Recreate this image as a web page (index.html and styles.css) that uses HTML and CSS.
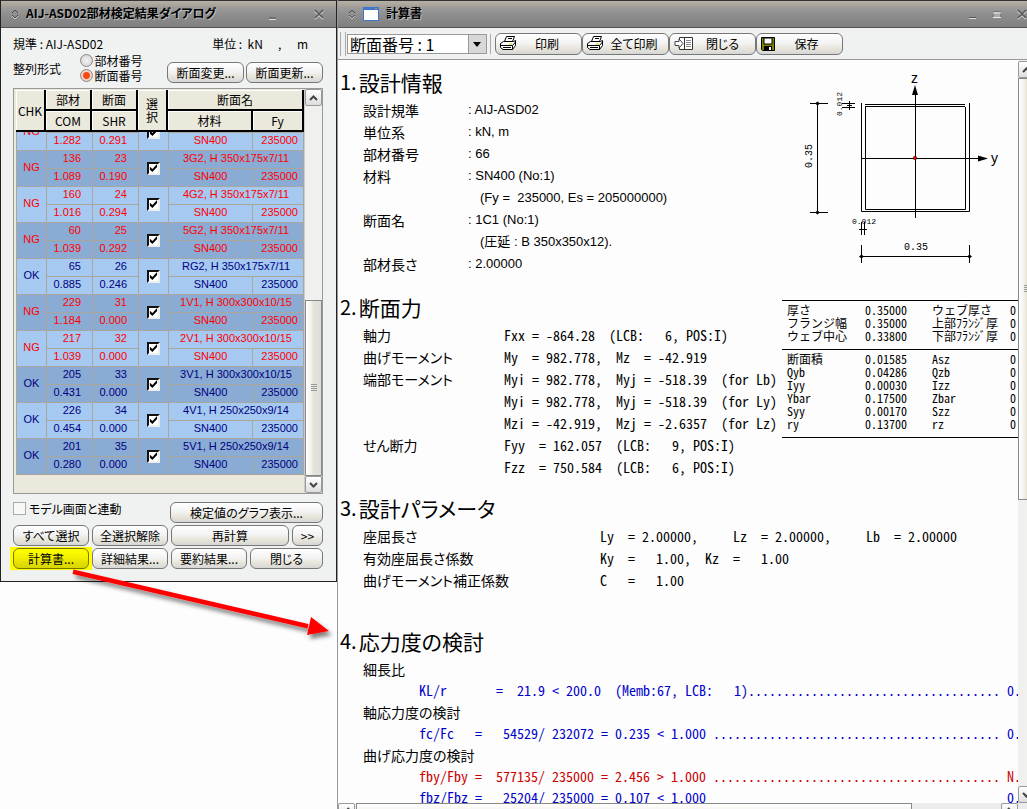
FILE: index.html
```
<!DOCTYPE html>
<html lang="ja">
<head>
<meta charset="utf-8">
<title>計算書</title>
<link rel="stylesheet" href="styles.css">
</head>
<body>
<div class="desktop">
  <section class="dialog">
    <header class="titlebar">
      <svg class="grip" width="8" height="12" viewBox="0 0 8 12"><path d="M1 5 4 2l3 3M1 7l3 3 3-3" fill="none" stroke="#4c4c4c"/><path d="M1 8l3 3 3-3" fill="none" stroke="#c8c8c8"/></svg>
      <h1 class="title">AIJ-ASD02部材検定結果ダイアログ</h1>
      <span class="caption">
        <svg width="8" height="12" viewBox="0 0 8 12"><path d="M0 10h7" stroke="#555"/><path d="M0 11.500h7" stroke="#ddd"/></svg>
        <svg width="10" height="12" viewBox="0 0 10 12"><path d="M1 3l8 8M9 3l-8 8" stroke="#ccc" stroke-width="2"/><path d="M1 2l8 8M9 2l-8 8" stroke="#555" stroke-width="1.500"/></svg>
      </span>
    </header>
    <div class="panel">
      <div class="spec"><span>規準 : AIJ-ASD02</span><span class="units">単位 :&nbsp; kN<i>,</i>m</span></div>
      <div class="sort">
        <span>整列形式</span>
        <div class="radios">
          <label><input class="radio" type="radio" name="order">部材番号</label>
          <label><input class="radio" type="radio" name="order" checked>断面番号</label>
        </div>
        <div class="sortbuttons"><button class="btn">断面変更...</button><button class="btn">断面更新...</button></div>
      </div>
      <div class="gridbox">
        <div class="gridmain">
          <table class="head">
            <colgroup><col class="c1"><col class="c2"><col class="c2"><col class="c3"><col class="c4"><col class="c5"></colgroup>
            <tr><th rowspan="2">CHK</th><th>部材</th><th>断面</th><th rowspan="2" class="pick">選<br>択</th><th colspan="2">断面名</th></tr>
            <tr><th>COM</th><th>SHR</th><th>材料</th><th>Fy</th></tr>
          </table>
          <div class="rows">
            <table class="body">
              <colgroup><col class="c1"><col class="c2"><col class="c2"><col class="c3"><col class="c4"><col class="c5"></colgroup>
              <tbody class="ng"><tr><td rowspan="2">NG</td><td></td><td></td><td rowspan="2"><input class="check" type="checkbox" aria-label="22" checked></td><td colspan="2"></td></tr>
              <tr><td class="n">1.282</td><td class="n">0.291</td><td>SN400</td><td class="f">235000</td></tr></tbody>
              <tbody class="ng"><tr><td rowspan="2">NG</td><td class="n">136</td><td class="n">23</td><td rowspan="2"><input class="check" type="checkbox" aria-label="23" checked></td><td colspan="2">3G2, H 350x175x7/11</td></tr>
              <tr><td class="n">1.089</td><td class="n">0.190</td><td>SN400</td><td class="f">235000</td></tr></tbody>
              <tbody class="ng"><tr><td rowspan="2">NG</td><td class="n">160</td><td class="n">24</td><td rowspan="2"><input class="check" type="checkbox" aria-label="24" checked></td><td colspan="2">4G2, H 350x175x7/11</td></tr>
              <tr><td class="n">1.016</td><td class="n">0.294</td><td>SN400</td><td class="f">235000</td></tr></tbody>
              <tbody class="ng"><tr><td rowspan="2">NG</td><td class="n">60</td><td class="n">25</td><td rowspan="2"><input class="check" type="checkbox" aria-label="25" checked></td><td colspan="2">5G2, H 350x175x7/11</td></tr>
              <tr><td class="n">1.039</td><td class="n">0.292</td><td>SN400</td><td class="f">235000</td></tr></tbody>
              <tbody><tr><td rowspan="2">OK</td><td class="n">65</td><td class="n">26</td><td rowspan="2"><input class="check" type="checkbox" aria-label="26" checked></td><td colspan="2">RG2, H 350x175x7/11</td></tr>
              <tr><td class="n">0.885</td><td class="n">0.246</td><td>SN400</td><td class="f">235000</td></tr></tbody>
              <tbody class="ng"><tr><td rowspan="2">NG</td><td class="n">229</td><td class="n">31</td><td rowspan="2"><input class="check" type="checkbox" aria-label="31" checked></td><td colspan="2">1V1, H 300x300x10/15</td></tr>
              <tr><td class="n">1.184</td><td class="n">0.000</td><td>SN400</td><td class="f">235000</td></tr></tbody>
              <tbody class="ng"><tr><td rowspan="2">NG</td><td class="n">217</td><td class="n">32</td><td rowspan="2"><input class="check" type="checkbox" aria-label="32" checked></td><td colspan="2">2V1, H 300x300x10/15</td></tr>
              <tr><td class="n">1.039</td><td class="n">0.000</td><td>SN400</td><td class="f">235000</td></tr></tbody>
              <tbody><tr><td rowspan="2">OK</td><td class="n">205</td><td class="n">33</td><td rowspan="2"><input class="check" type="checkbox" aria-label="33" checked></td><td colspan="2">3V1, H 300x300x10/15</td></tr>
              <tr><td class="n">0.431</td><td class="n">0.000</td><td>SN400</td><td class="f">235000</td></tr></tbody>
              <tbody><tr><td rowspan="2">OK</td><td class="n">226</td><td class="n">34</td><td rowspan="2"><input class="check" type="checkbox" aria-label="34" checked></td><td colspan="2">4V1, H 250x250x9/14</td></tr>
              <tr><td class="n">0.454</td><td class="n">0.000</td><td>SN400</td><td class="f">235000</td></tr></tbody>
              <tbody><tr><td rowspan="2">OK</td><td class="n">201</td><td class="n">35</td><td rowspan="2"><input class="check" type="checkbox" aria-label="35" checked></td><td colspan="2">5V1, H 250x250x9/14</td></tr>
              <tr><td class="n">0.280</td><td class="n">0.000</td><td>SN400</td><td class="f">235000</td></tr></tbody>
            </table>
          </div>
        </div>
        <div class="vbar">
          <span class="sbtn"><svg width="9" height="6" viewBox="0 0 9 6"><path d="M1 5l3.500-3.500L8 5" fill="none" stroke="#444" stroke-width="2"/></svg></span>
          <span class="track"></span>
          <span class="thumb"><svg width="6" height="8" viewBox="0 0 6 8"><path d="M0 .5h6M0 2.500h6M0 4.500h6M0 6.500h6" stroke="#999"/></svg></span>
          <span class="sbtn"><svg width="9" height="6" viewBox="0 0 9 6"><path d="M1 1l3.500 3.500L8 1" fill="none" stroke="#444" stroke-width="2"/></svg></span>
        </div>
      </div>
      <div class="link"><label><input class="tick" type="checkbox">モデル画面と連動</label><button class="btn">検定値のグラフ表示...</button></div>
      <div class="actions">
        <button class="btn">すべて選択</button><button class="btn">全選択解除</button><button class="btn grow">再計算</button><button class="btn more">&gt;&gt;</button>
      </div>
      <div class="actions">
        <span class="marked"><button class="btn">計算書...</button></span><button class="btn">詳細結果...</button><button class="btn">要約結果...</button><button class="btn grow">閉じる</button>
      </div>
    </div>
  </section>

  <main class="report">
    <header class="titlebar">
      <svg class="grip" width="8" height="12" viewBox="0 0 8 12"><path d="M1 5 4 2l3 3M1 7l3 3 3-3" fill="none" stroke="#4c4c4c"/><path d="M1 8l3 3 3-3" fill="none" stroke="#c8c8c8"/></svg>
      <svg class="app" width="16" height="14" viewBox="0 0 16 14"><path d="M0 0h16v14H0z" fill="#3c78d0"/><path d="M1 3h14v10H1z" fill="#fff"/><path d="M12 1h2v1h-2z" fill="#f08030"/></svg>
      <h1 class="title">計算書</h1>
      <span class="caption cut">
        <svg width="8" height="12" viewBox="0 0 8 12"><path d="M0 9.500h7" stroke="#555"/><path d="M0 10.500h7" stroke="#ddd"/></svg>
        <svg width="10" height="12" viewBox="0 0 10 12"><path d="M1.500 3.500h7v6h-7z" fill="#aaa" stroke="#777"/><path d="M1 5h8M1 9.500h8" stroke="#eee"/></svg>
        <svg width="10" height="12" viewBox="0 0 10 12"><path d="M1 3l8 8M9 3l-8 8" stroke="#ccc" stroke-width="2"/><path d="M1 2l8 8M9 2l-8 8" stroke="#555" stroke-width="1.500"/></svg>
      </span>
    </header>
    <nav class="toolbar">
      <span class="handle"></span>
      <span class="picker"><select aria-label="断面番号"><option>断面番号 : 1</option></select><svg width="18" height="18" viewBox="0 0 18 18"><path d="M0 0h18v18H0z" fill="#d8d8d8"/><path d="M.5 0v18" stroke="#999"/><path d="M5 7h8l-4 5z" fill="#000"/></svg></span>
      <span class="sep"></span>
      <button class="btn tool"><svg width="17" height="15" viewBox="0 0 17 15"><path d="M6.500 .5h8l-2 5h-8z" fill="#fff" stroke="#000"/><path d="M.5 7.500l3-2h10l2-1v5l-3 4H3l-2.500-2z" fill="#fff" stroke="#000"/><path d="M1 9.500h11.500l3-3.500M3 11.500h8M12.500 9.500v4M8 2.500h4" fill="none" stroke="#000"/><path d="M9 8h3" stroke="#cc0"/></svg><span>印刷</span></button>
      <button class="btn tool"><svg width="17" height="15" viewBox="0 0 17 15"><path d="M6.500 .5h8l-2 5h-8z" fill="#fff" stroke="#000"/><path d="M.5 7.500l3-2h10l2-1v5l-3 4H3l-2.500-2z" fill="#fff" stroke="#000"/><path d="M1 9.500h11.500l3-3.500M3 11.500h8M12.500 9.500v4M8 2.500h4" fill="none" stroke="#000"/><path d="M9 8h3" stroke="#cc0"/></svg><span>全て印刷</span></button>
      <button class="btn tool"><svg width="20" height="15" viewBox="0 0 20 15"><path d="M5.500 1.500h13v12h-13zM10.500 1v13" fill="#fff" stroke="#333"/><path d="M12 4.500h5M12 6.500h5M12 8.500h5M12 10.500h5" stroke="#888"/><path d="M1 5.500h4V3l4 4.500L5 12V9.500H1z" fill="#fff" stroke="#444"/></svg><span>閉じる</span></button>
      <button class="btn tool"><svg width="14" height="14" viewBox="0 0 14 14"><path d="M.5.5h13v13h-12l-1-1z" fill="#808000" stroke="#000"/><path d="M3 1h8v6H3z" fill="#fff" stroke="#000"/><path d="M3 9h8v5H3z" fill="#000"/><path d="M8 10h2v3H8z" fill="#fff"/></svg><span>保存</span></button>
    </nav>
    <div class="view">
      <article class="paper">
        <div class="upper">
          <div class="summary">
            <h2>1. <b>設計情報</b></h2>
            <dl class="info">
              <dt>設計規準</dt><dd>: AIJ-ASD02</dd>
              <dt>単位系</dt><dd>: kN, m</dd>
              <dt>部材番号</dt><dd>: 66</dd>
              <dt>材料</dt><dd>: SN400 (No:1)</dd>
              <dd class="sub">(Fy =&nbsp; 235000, Es = 205000000)</dd>
              <dt>断面名</dt><dd>: 1C1 (No:1)</dd>
              <dd class="sub">(圧延 : B 350x350x12).</dd>
              <dt>部材長さ</dt><dd>: 2.00000</dd>
            </dl>
            <h2 class="second">2. <b>断面力</b></h2>
            <dl class="info forces">
              <dt>軸力</dt><dd>Fxx = -864.28  (LCB:   6, POS:I)</dd>
              <dt>曲げモーメント</dt><dd>My  = 982.778,  Mz  = -42.919</dd>
              <dt>端部モーメント</dt><dd>Myi = 982.778,  Myj = -518.39  (for Lb)</dd>
              <dd>Myi = 982.778,  Myj = -518.39  (for Ly)</dd>
              <dd>Mzi = -42.919,  Mzj = -2.6357  (for Lz)</dd>
              <dt>せん断力</dt><dd>Fyy  = 162.057  (LCB:   9, POS:I)</dd>
              <dd>Fzz  = 750.584  (LCB:   6, POS:I)</dd>
            </dl>
          </div>
          <aside class="figure">
            <svg class="drawing" width="236" height="240" viewBox="782 60 236 240">
              <g fill="none" stroke="#000">
                <path d="M861.500 103v108.500h108V103M865 104.500h100M865.500 106v103.500h100V107M865 106.500h100"/>
                <path d="M861 158.500h120M915.500 93v125"/>
                <path d="M810 103.500h18M810 212.500h18M817.500 103v109"/>
                <path d="M842 103.500h13M842 107.500h13M849.500 101v9M847 105.500h5"/>
                <path d="M861.500 222v13M864.500 222v13M859 229.500h8"/>
                <path d="M861.500 245v18M969.500 245v18M861 256.500h108"/>
              </g>
              <path d="M915 85l3 10h-6zM988 158.500l-10 3v-6zM815 103.500l2.500-2 2.500 2-2.500 2zM815 212.500l2.500-2 2.500 2-2.500 2zM859 256.500l2.500-2 2.500 2-2.500 2zM967 256.500l2.500-2 2.500 2-2.500 2z"/>
              <circle cx="915" cy="158" r="1.800" fill="#e00" stroke="#000" stroke-width=".5"/>
              <text class="axis" x="911" y="83">z</text><text class="axis" x="991" y="163">y</text>
              <text class="dim" x="904" y="250">0.35</text><text class="dim small" x="852" y="224">0.012</text>
              <text class="dim" transform="translate(812 168) rotate(-90)">0.35</text>
              <text class="dim small" transform="translate(842 116) rotate(-90)">0.012</text>
            </svg>
            <table class="props">
              <tbody>
                <tr><th>厚さ</th><td>0.35000</td><th>ウェブ厚さ</th><td class="edge">0.</td></tr>
                <tr><th>フランジ幅</th><td>0.35000</td><th>上部ﾌﾗﾝｼﾞ厚</th><td class="edge">0.</td></tr>
                <tr><th>ウェブ中心</th><td>0.33800</td><th>下部ﾌﾗﾝｼﾞ厚</th><td class="edge">0.</td></tr>
              </tbody>
              <tbody>
                <tr><th>断面積</th><td>0.01585</td><th>Asz</th><td class="edge">0.</td></tr>
                <tr><th>Qyb</th><td>0.04286</td><th>Qzb</th><td class="edge">0.</td></tr>
                <tr><th>Iyy</th><td>0.00030</td><th>Izz</th><td class="edge">0.</td></tr>
                <tr><th>Ybar</th><td>0.17500</td><th>Zbar</th><td class="edge">0.</td></tr>
                <tr><th>Syy</th><td>0.00170</td><th>Szz</th><td class="edge">0.</td></tr>
                <tr><th>ry</th><td>0.13700</td><th>rz</th><td class="edge">0.</td></tr>
              </tbody>
            </table>
          </aside>
        </div>
        <h2>3. <b>設計パラメータ</b></h2>
        <dl class="info params">
          <dt>座屈長さ</dt><dd>Ly  = 2.00000,     Lz  = 2.00000,     Lb  = 2.00000</dd>
          <dt>有効座屈長さ係数</dt><dd>Ky  =   1.00,  Kz  =   1.00</dd>
          <dt>曲げモーメント補正係数</dt><dd>C   =   1.00</dd>
        </dl>
        <h2 class="fourth">4. <b>応力度の検討</b></h2>
        <div class="stress">
          <h3>細長比</h3>
          <p>KL/r       =  21.9 &lt; 200.0  (Memb:67, LCB:   1).................................... 0.</p>
          <h3>軸応力度の検討</h3>
          <p>fc/Fc   =   54529/ 232072 = 0.235 &lt; 1.000 ......................................... 0.</p>
          <h3>曲げ応力度の検討</h3>
          <p class="bad">fby/Fby =  577135/ 235000 = 2.456 &gt; 1.000 ......................................... N.</p>
          <p>fbz/Fbz =   25204/ 235000 = 0.107 &lt; 1.000                                           0.</p>
        </div>
      </article>
      <div class="vbar side">
        <span class="sbtn"><svg width="9" height="6" viewBox="0 0 9 6"><path d="M1 5l3.500-3.500L8 5" fill="none" stroke="#444" stroke-width="2"/></svg></span>
        <span class="thumb"><svg width="6" height="8" viewBox="0 0 6 8"><path d="M0 .5h6M0 2.500h6M0 4.500h6M0 6.500h6" stroke="#999"/></svg></span>
        <span class="track"></span>
        <span class="sbtn"><svg width="9" height="6" viewBox="0 0 9 6"><path d="M1 1l3.500 3.500L8 1" fill="none" stroke="#444" stroke-width="2"/></svg></span>
      </div>
    </div>
    <div class="hbar">
      <span class="sbtn"><svg width="6" height="9" viewBox="0 0 6 9"><path d="M5 1L1.500 4.500 5 8" fill="none" stroke="#444" stroke-width="2"/></svg></span>
      <span class="hthumb"></span><span class="htrack"></span>
      <span class="sbtn"><svg width="6" height="9" viewBox="0 0 6 9"><path d="M1 1l3.500 3.500L1 8" fill="none" stroke="#444" stroke-width="2"/></svg></span>
    </div>
  </main>

  <svg class="pointer" width="270" height="80" viewBox="68 565 270 80">
    <defs><filter id="soft" x="-10%" y="-20%" width="130%" height="150%"><feDropShadow dx="3" dy="4" stdDeviation="2" flood-color="#000" flood-opacity=".5"/></filter></defs>
    <g filter="url(#soft)" fill="#f00"><path d="M73.500 569.500l235 54.500-1 4.500-235-54.500z"/><path d="M311 617l18 14-22 4z"/></g>
  </svg>
</div>
</body>
</html>
```
FILE: styles.css
```
* { box-sizing: border-box; }
body {
  margin: 0;
  background: #fdfdfd;
  color: #000;
  font-family: "Noto Sans CJK JP", sans-serif;
  font-size: 12px;
  line-height: 16px;
}
h1, h2, h3, p, dl, dt, dd { margin: 0; font-weight: 400; }
table { border-collapse: separate; border-spacing: 0; table-layout: fixed; }
th { font-weight: 400; }
svg { display: block; flex: none; }
button, input, select { font: inherit; color: inherit; margin: 0; }

.desktop { position: relative; display: flex; align-items: flex-start; height: 100vh; overflow: hidden; }

.titlebar {
  display: flex;
  flex: none;
  align-items: center;
  height: 28px;
  padding: 0 12px 0 10px;
  border-top: 1px solid #333;
  border-bottom: 1px solid #555;
  background: linear-gradient(#b5b0a8, #a5a098 20%, #999 30%, #8b8b8b 60%, #808080);
}
.grip { margin-right: 7px; }
.app { margin-right: 7px; }
.title { font-size: 12px; line-height: 24px; height: 27px; font-weight: 700; font-feature-settings: "palt"; text-shadow: 1px 1px #bbb; white-space: nowrap; }
.caption { display: flex; gap: 37px; margin-left: auto; }
.cut { gap: 15px; margin-right: -12px; }

.dialog { flex: none; width: 337px; border: 1px solid #222; border-top: 0; background: #f0f2f1; }
.panel { padding: 8px 13px 12px 12px; }
.spec { display: flex; justify-content: space-between; padding-right: 15px; }
.units i { display: inline-block; width: 34px; padding-left: 15px; font-style: normal; }
.sort { display: flex; align-items: flex-start; justify-content: space-between; height: 36px; }
.sort > span { padding-top: 9px; }
.radios { margin-left: 6px; padding-top: 1px; line-height: 15px; }
.radios label { display: flex; align-items: center; gap: 2px; }
.radio {
  appearance: none;
  width: 13px;
  height: 13px;
  border: 1px solid #888;
  border-radius: 50%;
  background: radial-gradient(#f4f4f4, #ccc);
}
.radio:checked { background: radial-gradient(#f54a10 0 3px, #f6cfc2 4px, #e0dcd8); }
.sortbuttons { display: flex; gap: 2px; padding-top: 10px; margin-left: 12px; }
.sortbuttons .btn { width: 77px; }

.btn {
  height: 21px;
  padding: 0;
  border: 1px solid #777;
  border-radius: 6px;
  background: linear-gradient(#fff, #f3f3f3 45%, #e9e6db 70%, #d6d6d6);
  line-height: 17px;
  white-space: nowrap;
  font-feature-settings: "palt";
}

.gridbox { display: flex; height: 406px; border: 1px solid #999; background: #ebe8dc; }
.gridmain { display: flex; flex: 1; flex-direction: column; min-width: 0; padding: 1px 0 1px 2px; }
.head, .body { width: 100%; }
.c1 { width: 30px; }
.c2 { width: 46px; }
.c3 { width: 30px; }
.c5 { width: 51px; }
.head { background: #bbb; }
.head th {
  height: 21px;
  padding: 0;
  border: solid #000;
  border-width: 0 2px 2px 0;
  box-shadow: inset 1px 1px #fff;
  background: #ebe8dc;
  line-height: 17px;
}
.head .pick { line-height: 13px; }
.rows { display: flex; flex: 1; flex-direction: column; justify-content: flex-end; min-height: 0; padding-bottom: 17px; overflow: hidden; }
.body { font-family: "Liberation Sans", sans-serif; font-size: 11px; line-height: 12px; border-left: 1px solid #aaa69c; color: #000080; }
.body tbody { background: #8aabd3; }
.body tbody:nth-of-type(odd) { background: #a5c9f1; }
.body .ng { color: #f00; }
.body td { height: 18px; padding: 0 0 3px; border: solid #aaa69c; border-width: 0 1px 1px 0; text-align: center; }
.body .n { padding-right: 11px; text-align: right; }
.body .f { padding-right: 5px; text-align: right; }
.check {
  appearance: none;
  display: block;
  width: 13px;
  height: 13px;
  margin: 2px auto 0;
  border: 2px solid;
  border-color: #111 #eee #eee #111;
  background: #fff;
}
.check:checked::before {
  content: "";
  display: block;
  width: 9px;
  height: 9px;
  background: #000;
  clip-path: polygon(10% 35%, 38% 60%, 90% 5%, 90% 40%, 38% 95%, 10% 70%);
}
.vbar { display: flex; flex: none; flex-direction: column; width: 18px; background: #f0f0ee; border-left: 1px solid #ccc; }
.sbtn { display: flex; flex: none; align-items: center; justify-content: center; width: 17px; height: 17px; border: 1px solid #999; border-radius: 2px; background: linear-gradient(#fff, #ddd); }
.thumb { display: flex; align-items: center; justify-content: center; width: 17px; height: 176px; border: 1px solid #888; background: linear-gradient(90deg, #fff, #efefe8 40%, #e6e3d6 50%, #ddd); }
.track { flex: 1; }

.link { display: flex; align-items: flex-start; justify-content: space-between; padding-top: 8px; }
.link label { display: flex; gap: 3px; font-feature-settings: "palt"; line-height: 13px; }
.link .btn { width: 153px; }
.tick { appearance: none; width: 13px; height: 13px; border: 1px solid #aaa; background: #f8f8f4; }
.actions { display: flex; gap: 3px; padding-top: 2px; }
.actions .btn { flex: none; width: 76px; }
.actions .grow { flex: 1; }
.actions .more { width: 31px; }
.marked { margin: -1px -3px; padding: 1px 3px; background: #ff0; }
.marked .btn { background: linear-gradient(#ff0, #f2f200 45%, #e6e000 70%, #d6d600); border-color: #770; }

.report { display: flex; flex: 1; flex-direction: column; min-width: 0; height: 100%; border-left: 1px solid #999; background: #fdfdfd; overflow: hidden; }
.toolbar { display: flex; flex: none; align-items: center; height: 32px; padding: 0 3px 0 2px; border-bottom: 1px solid #999; background: #f0f2f1; }
.handle { width: 6px; height: 24px; border: solid #aaa; border-width: 0 1px; }
.picker { position: relative; display: flex; width: 140px; height: 20px; margin-left: 1px; border: 1px solid #999; background: #fff; }
.picker select { appearance: none; flex: 1; padding: 0 2px; border: 0; background: #fff; font-size: 16px; line-height: 18px; }
.picker svg { position: absolute; top: 0; right: 0; pointer-events: none; }
.sep { width: 1px; height: 20px; margin: 0 4px 0 3px; background: #aaa; }
.tool { display: flex; align-items: center; width: 87px; height: 22px; padding: 0 4px; }
.tool span { flex: 1; text-align: center; }

.view { display: flex; flex: 1; min-height: 0; }
.paper { flex: 1; min-width: 0; overflow: hidden; padding: 8px 0 0 2px; }
.upper { display: flex; }
.summary { flex: 1; min-width: 0; }
h2 { display: flex; gap: 2px; height: 31px; font-size: 20px; line-height: 28px; font-feature-settings: "palt"; white-space: nowrap; }
h2 b { font-size: 21px; font-weight: 400; }
.second { margin-top: 18px; }
.fourth { margin-top: 36px; }
.info { display: grid; grid-template-columns: 105px 1fr; padding-left: 23px; font-size: 14px; line-height: 22px; white-space: pre; }
.info dt, h3 { font-feature-settings: "palt"; }
.info dd { grid-column: 2; font-family: "Liberation Sans", "Noto Sans CJK JP", sans-serif; font-size: 13px; }
.info .sub { padding-left: 12px; }
.forces { grid-template-columns: 141px 1fr; }
.params { grid-template-columns: 237px 1fr; }
.forces dd, .params dd, .stress p { font-family: "Noto Sans CJK JP", monospace; font-size: 14px; font-feature-settings: "hwid"; white-space: pre; }
.stress { padding-left: 23px; color: #00c; }
.stress h3 { font-size: 14px; line-height: 22px; color: #000; }
.stress p { padding-left: 56px; line-height: 21px; }
.stress .bad { color: #c00; }

.figure { flex: none; width: 236px; height: 434px; margin-top: -8px; overflow: hidden; }
.axis { font: 14px "Liberation Sans", sans-serif; }
.dim { font: 10px "Liberation Mono", monospace; }
.small { font-size: 8px; }
.props { width: 100%; border-bottom: 1px solid #000; font-size: 12px; line-height: 13px; font-feature-settings: "hwid"; white-space: nowrap; }
.props th, .props td { height: 13px; padding: 0; text-align: left; }
.props th { width: 83px; padding-left: 5px; }
.props td { width: 62px; }
.props .edge { width: auto; }
.props tbody tr:first-child > * { border-top: 1px solid #000; padding-top: 2px; }
.props tbody tr:last-child > * { padding-bottom: 7px; }

.side { width: 9px; overflow: hidden; padding-top: 1px; border-left: 0; }
.side .thumb { height: 422px; }
.hbar { display: flex; flex: none; align-items: flex-start; height: 6px; padding-right: 9px; background: #ececec; overflow: hidden; }
.hthumb { flex: 557; height: 17px; margin-left: 1px; border: 1px solid #888; background: linear-gradient(#fff, #e6e3d6); }
.htrack { flex: 89; }

.pointer { position: absolute; left: 68px; top: 565px; pointer-events: none; }
```
